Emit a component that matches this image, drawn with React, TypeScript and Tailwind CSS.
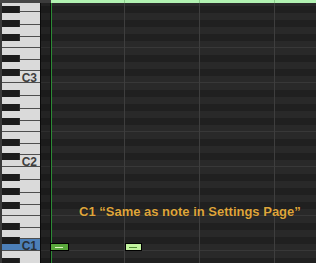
import React from 'react';

const OCT = ['B', 'A#', 'A', 'G#', 'G', 'F#', 'F', 'E', 'D#', 'D', 'C#', 'C'];

function GridRows({ dark }: { dark?: boolean }) {
  const rows: React.ReactNode[] = [];
  for (let i = 0; i < 39; i++) {
    const n = OCT[i % 12];
    const black = n.includes('#');
    const line = i > 0 && (n === 'C' || n === 'F');
    const h = i === 0 ? 'h-[3px]' : 'h-[7px]';
    const bg = dark
      ? black
        ? 'bg-[#1b1b1b]'
        : 'bg-[#232323]'
      : black
        ? 'bg-[#202020]'
        : 'bg-[#292929]';
    const ln = line ? (dark ? 'border-b border-[#2e2e2e]' : 'border-b border-[#383838]') : '';
    rows.push(<div key={i} className={`shrink-0 ${h} ${bg} ${ln}`} />);
  }
  return <>{rows}</>;
}

const H: Record<number, string> = {
  9: 'h-[9px]',
  11: 'h-[11px]',
  12: 'h-[12px]',
  13: 'h-[13px]',
};

type WK = { name: string; oct: number; h: number };

function buildWhites(): WK[] {
  const seq: [string, number][] = [
    ['B', 13],
    ['A', 13],
    ['G', 12],
    ['F', 11],
    ['E', 12],
    ['D', 11],
    ['C', 12],
  ];
  const out: WK[] = [];
  for (let oct = 3; oct >= 0; oct--) {
    for (const [name, h] of seq) {
      out.push({ name, oct, h: oct === 3 && name === 'B' ? 9 : h });
    }
  }
  return out;
}

function Keyboard() {
  const whites = buildWhites();
  const blackTops: number[] = [];
  for (let k = 0; k < 4; k++) {
    const cb = 83 + 84 * k;
    blackTops.push(cb - 77, cb - 63, cb - 49, cb - 28, cb - 14);
  }
  return (
    <div className="relative w-[40px] shrink-0 flex flex-col bg-[#3a3a3a] pl-[2px] overflow-hidden">
      <div className="h-[3px] shrink-0 bg-[#474747] -ml-[2px]" />
      {whites.map((w, i) => {
        const isC1 = w.name === 'C' && w.oct === 1;
        const label = w.name === 'C' && w.oct >= 1;
        return (
          <div
            key={i}
            className={`shrink-0 ${H[w.h]} border-b border-[#4e4e4e] flex justify-end items-start pt-[1px] pr-[3px] ${
              isC1 ? 'bg-[#4c7fb8]' : 'bg-[#dadada]'
            }`}
          >
            {label && (
              <span
                className={`text-[12px] leading-[12px] font-bold ${
                  isC1 ? 'text-[#283038]' : 'text-[#3e3e3e]'
                }`}
              >
                {`C${w.oct}`}
              </span>
            )}
          </div>
        );
      })}
      {blackTops.map((t, i) => (
        <div
          key={i}
          className="absolute left-[2px] w-[18px] h-[7px] bg-[#1c1c1c] border-r border-[#2e2e2e]"
          style={{ top: t }}
        />
      ))}
    </div>
  );
}

export default function App() {
  return (
    <div
      className="relative flex w-[316px] h-[263px] overflow-hidden bg-[#222222]"
      style={{ fontFamily: '"Liberation Sans", Arial, sans-serif' }}
    >
      <Keyboard />
      <div className="w-px shrink-0 bg-[#0a0a0a] flex flex-col">
        <div className="h-[3px] bg-[#3c3c3c]" />
      </div>
      <div className="w-[9px] shrink-0 flex flex-col overflow-hidden">
        <div className="h-[3px] shrink-0 bg-[#3c3c3c]" />
        <GridRows dark />
      </div>
      <div className="w-px shrink-0 bg-[#0a0a0a] flex flex-col">
        <div className="h-[3px] bg-[#3c3c3c]" />
      </div>
      <div className="w-px shrink-0 bg-[#2c8a35] flex flex-col">
        <div className="h-[3px] bg-[#b2f2b2]" />
      </div>
      <div className="relative flex-1 flex flex-col overflow-hidden">
        <div className="h-[3px] shrink-0 bg-[#b2f2b2]" />
        <GridRows />
        {[72, 147, 222].map((x) => (
          <div key={x} className="absolute top-0 bottom-0 w-px flex flex-col" style={{ left: x }}>
            <div className="h-[3px] bg-[#8ccc8c]" />
            <div className="flex-1 bg-[#3e3e3e]" />
          </div>
        ))}
      </div>

      {/* notes */}
      <div className="absolute left-[50px] top-[243px] w-[19px] h-[8px] border border-black bg-[#5aa83c] flex items-center justify-center">
        <div className="w-[8px] h-px bg-[#dff5c4] -ml-[2px]" />
      </div>
      <div className="absolute left-[125px] top-[243px] w-[17px] h-[8px] border border-black bg-[#c3f3a0] flex items-center justify-center">
        <div className="w-[8px] h-px bg-[#4f8a32] -ml-px" />
      </div>

      {/* annotation */}
      <div className="absolute left-[79px] top-[205px] text-[13px] leading-[13px] font-bold text-[#dfa53c] whitespace-nowrap [text-shadow:0_0_1px_rgba(0,0,0,0.6)]">
        C1 “Same as note in Settings Page”
      </div>
    </div>
  );
}
